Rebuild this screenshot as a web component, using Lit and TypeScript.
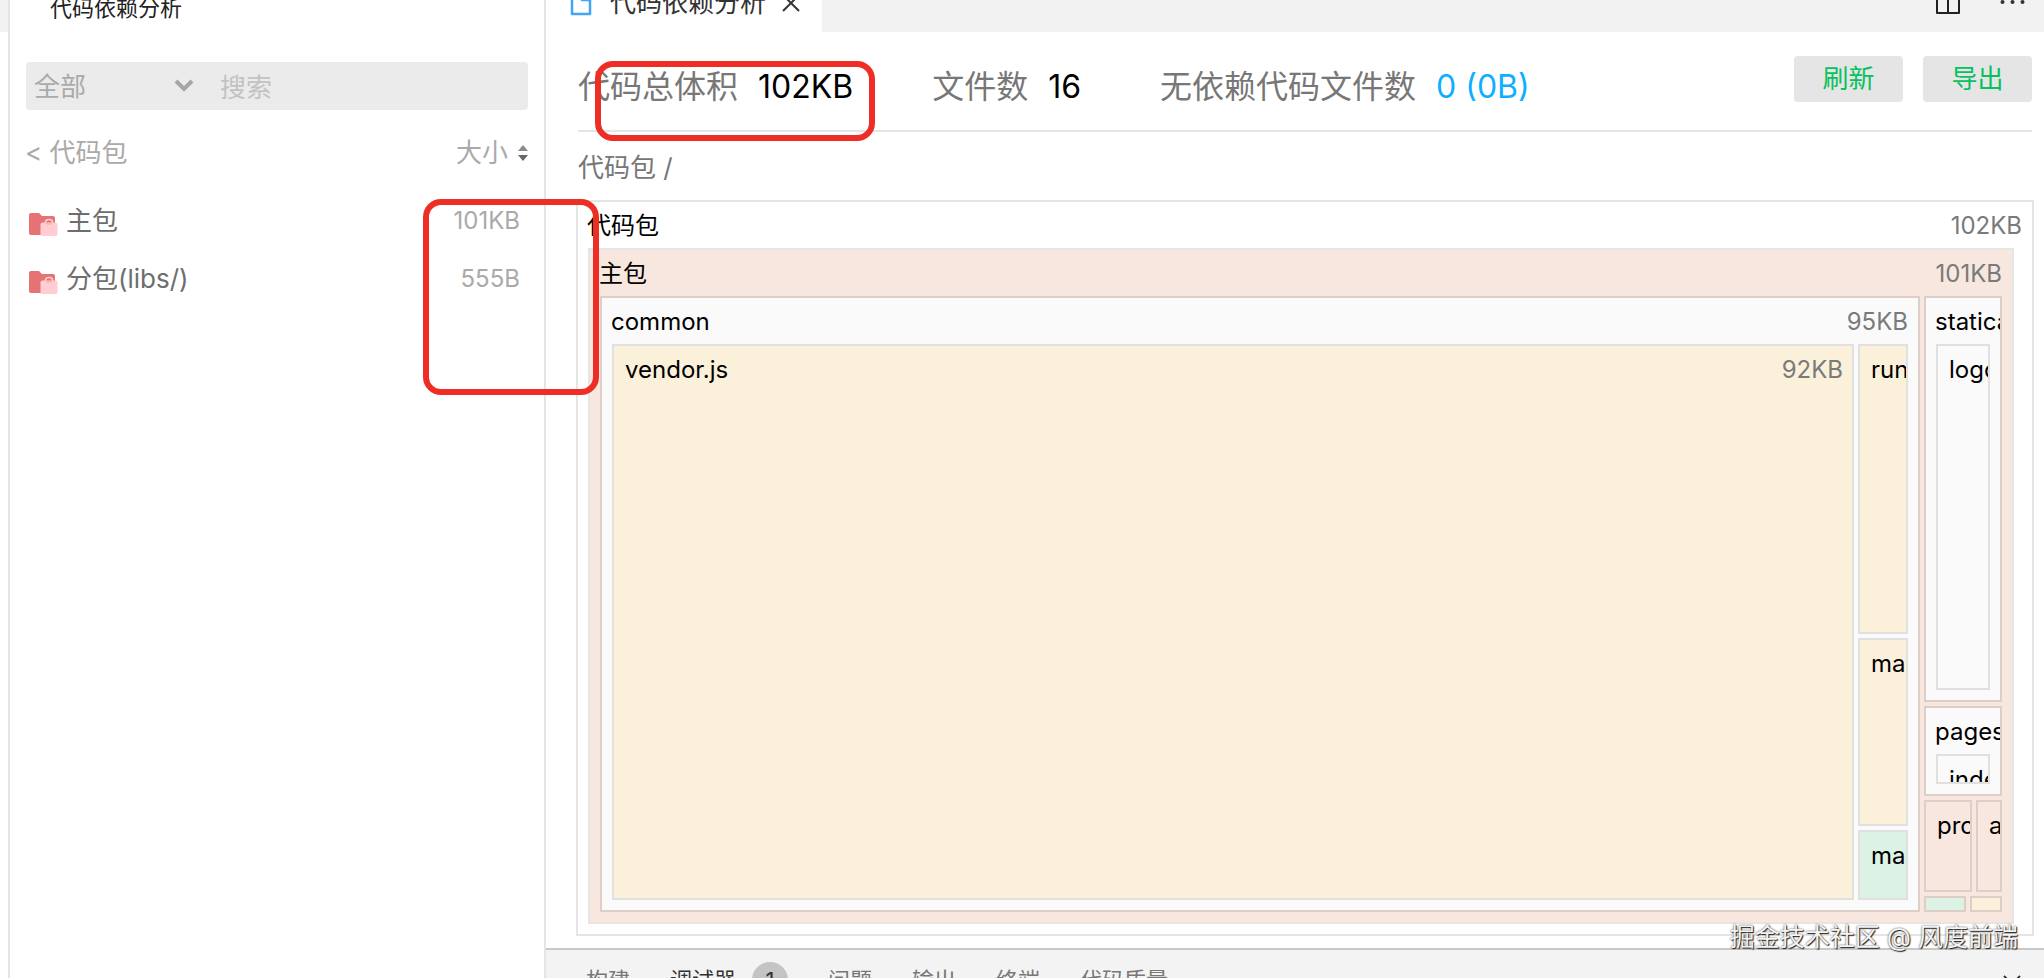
import { LitElement, html, css, svg, nothing, type TemplateResult } from "lit";
import { customElement, property } from "lit/decorators.js";
import { classMap } from "lit/directives/class-map.js";

const FONT = css`Inter, "Noto Sans CJK SC", "Liberation Sans", sans-serif`;

interface Tile {
  name?: string;
  size?: string;
  tone?: "plain" | "rose" | "grey" | "sand" | "mint";
  layout?: string;
  children?: Tile[];
}

const TREE: Tile = {
  name: "代码包",
  size: "102KB",
  tone: "plain",
  layout: "root",
  children: [
    {
      name: "主包",
      size: "101KB",
      tone: "rose",
      layout: "main",
      children: [
        {
          name: "common",
          size: "95KB",
          tone: "grey",
          layout: "common",
          children: [
            { name: "vendor.js", size: "92KB", tone: "sand" },
            {
              layout: "scripts",
              children: [
                { name: "runtime.js", tone: "sand" },
                { name: "main.js", tone: "sand" },
                { name: "main.wxss", tone: "mint" },
              ],
            },
          ],
        },
        {
          layout: "rest",
          children: [
            { name: "statica", tone: "grey", layout: "single", children: [{ name: "logo.png", tone: "grey" }] },
            { name: "pages", tone: "grey", layout: "single", children: [{ name: "index", tone: "grey" }] },
            {
              layout: "pair",
              children: [
                { name: "project.config.json", tone: "rose" },
                { name: "app.json", tone: "rose" },
              ],
            },
            { layout: "tail", children: [{ tone: "mint" }, { tone: "sand" }] },
          ],
        },
      ],
    },
  ],
};

@customElement("size-treemap")
export class SizeTreemap extends LitElement {
  @property({ attribute: false }) tree: Tile = TREE;

  static styles = css`
    :host { display: grid; min-height: 0; font: 24px/48px ${FONT}; color: #000; }
    * { box-sizing: border-box; }
    .tile {
      display: flex; flex-direction: column; min-width: 0; min-height: 0; overflow: hidden;
      border: 2px solid rgba(0, 0, 0, 0.1); background-clip: padding-box;
    }
    .plain { background-color: #fff; }
    .rose { background-color: #f7e7df; }
    .grey { background-color: #fafafa; }
    .sand { background-color: #fbf1da; }
    .mint { background-color: #dcf2e5; }
    .head { display: flex; flex: none; height: 46px; padding: 0 10px 0 9px; white-space: nowrap; }
    .leaf { padding: 0 9px 0 11px; }
    .name { flex: 1 0 auto; }
    .size { color: #7a7a7a; }
    .body { flex: 1; display: grid; min-height: 0; padding: 0 10px 10px; }
    .group { display: grid; min-width: 0; min-height: 0; }
    .root { padding-right: 18px; }
    .main { gap: 4px; grid-template-columns: minmax(0, 1320fr) minmax(0, 78fr); }
    .common { gap: 4px; grid-template-columns: minmax(0, 1242fr) minmax(0, 50fr); }
    .scripts { gap: 4px; grid-template-rows: minmax(0, 290fr) minmax(0, 188fr) minmax(0, 70fr); }
    .rest { gap: 4px; grid-template-rows: minmax(0, 406fr) minmax(0, 90fr) minmax(0, 92fr) minmax(0, 16fr); }
    .pair { gap: 4px; grid-template-columns: minmax(0, 48fr) minmax(0, 26fr); }
    .tail { gap: 4px; grid-template-columns: minmax(0, 42fr) minmax(0, 32fr); }
  `;

  private tile(t: Tile): TemplateResult {
    if (!t.tone) {
      return html`<div class=${classMap({ group: true, [t.layout ?? "single"]: true })}>
        ${t.children?.map((c) => this.tile(c))}
      </div>`;
    }
    return html`<div class=${classMap({ tile: true, [t.tone]: true })}>
      ${t.name
        ? html`<div class=${classMap({ head: true, leaf: !t.children })}>
            <span class="name">${t.name}</span>
            ${t.size ? html`<span class="size">${t.size}</span>` : nothing}
          </div>`
        : nothing}
      ${t.children
        ? html`<div class=${classMap({ body: true, [t.layout ?? "single"]: true })}>
            ${t.children.map((c) => this.tile(c))}
          </div>`
        : nothing}
    </div>`;
  }

  render() {
    return this.tile(this.tree);
  }
}

const folderIcon = svg`<svg class="folder" width="30" height="24" viewBox="0 0 30 24" aria-hidden="true">
  <path d="M3 0h8l3 3h11a2 2 0 0 1 2 2v15a2 2 0 0 1-2 2H3a2 2 0 0 1-2-2V2a2 2 0 0 1 2-2z" fill="#e57373"/>
  <path d="M17.500 10V9a3.500 2.500 0 0 1 7 0v1" fill="none" stroke="#ffcdd2" stroke-width="1.500"/>
  <rect x="12.500" y="9.500" width="17" height="13.500" rx="2" fill="#ffcdd2"/>
  <path d="M18.500 10v1h5v-1" fill="none" stroke="#f4a9ab" stroke-width="1"/>
</svg>`;

const PACKAGES = [
  { name: "主包", size: "101KB" },
  { name: "分包(libs/)", size: "555B" },
];

@customElement("package-sidebar")
export class PackageSidebar extends LitElement {
  static styles = css`
    :host {
      display: block; width: 538px; border: solid #e5e5e5; border-width: 0 2px; background: #fff;
      font: 26px/36px ${FONT}; color: #aaa; overflow: hidden;
    }
    * { box-sizing: border-box; }
    h2 { margin: 0 0 42px; padding-left: 40px; height: 20px; display: flex; align-items: flex-end; font-size: 22px; line-height: 24px; font-weight: 400; color: #222; }
    .search { display: flex; align-items: center; height: 48px; margin: 0 16px; background: #ebebeb; border-radius: 4px; }
    .pick { position: relative; flex: none; width: 184px; display: flex; align-items: center; }
    select, input { font: inherit; color: inherit; border: 0; background: none; outline: 0; margin: 0; appearance: none; }
    select { width: 100%; padding: 2px 8px 0; height: 48px; }
    .caret { position: absolute; right: 16px; pointer-events: none; }
    input { flex: 1; min-width: 0; padding: 2px 10px 0; height: 48px; }
    input::placeholder { color: #c2c2c2; opacity: 1; }
    .bar { display: flex; justify-content: space-between; align-items: center; margin: 25px 16px 0 15px; }
    button { font: inherit; color: inherit; background: none; border: 0; padding: 0; display: flex; align-items: center; gap: 10px; }
    ul { list-style: none; margin: 21px 24px 0 18px; padding: 0; }
    li { display: flex; align-items: center; height: 58px; gap: 8px; color: #6e6e6e; }
    .folder { flex: none; margin-top: 8px; }
    .size { margin-left: auto; font-size: 24px; color: #aaa; }
  `;

  render() {
    return html`
      <h2>代码依赖分析</h2>
      <div class="search">
        <div class="pick">
          <select aria-label="类型"><option>全部</option></select>
          <svg class="caret" width="20" height="14" viewBox="0 0 20 14" aria-hidden="true">
            <path d="M2 2l8 8 8-8" fill="none" stroke="#a6a6a6" stroke-width="4" />
          </svg>
        </div>
        <input type="text" placeholder="搜索" aria-label="搜索" />
      </div>
      <div class="bar">
        <button type="button">&lt; 代码包</button>
        <button type="button">
          大小
          <svg width="10" height="18" viewBox="0 0 10 18" aria-hidden="true">
            <path d="M5 1l5 6H0z" fill="#8a8a8a" /><path d="M5 17l5-6H0z" fill="#666" />
          </svg>
        </button>
      </div>
      <ul>
        ${PACKAGES.map((p) => html`<li>${folderIcon}<span>${p.name}</span><span class="size">${p.size}</span></li>`)}
      </ul>
    `;
  }
}

@customElement("app-root")
export class AppRoot extends LitElement {
  static styles = css`
    :host {
      display: flex; position: relative; height: 100vh; overflow: hidden; background: #fff;
      font: 26px/36px ${FONT}; color: #000;
    }
    * { box-sizing: border-box; }
    .edge { flex: none; width: 8px; height: 32px; background: #f2f2f2; }
    package-sidebar { flex: none; }
    main { flex: 1; min-width: 0; display: flex; flex-direction: column; }
    .tabs { flex: none; display: flex; align-items: flex-end; justify-content: space-between; height: 32px; background: #f2f2f2; overflow: hidden; }
    .tab { display: flex; align-items: center; height: 58px; width: 276px; padding: 0 20px 0 24px; background: #fff; color: #333; }
    .tab svg { flex: none; }
    .tab span { margin: 0 16px 0 18px; white-space: nowrap; }
    .tools { display: flex; align-items: center; gap: 40px; height: 60px; padding-right: 19px; }
    button { font: inherit; color: inherit; border: 0; padding: 0; background: none; display: flex; align-items: center; }
    .stats { flex: none; display: flex; margin: 0 12px 0 32px; height: 100px; padding-top: 24px; border-bottom: 2px solid #e5e5e5; }
    dl { display: flex; gap: 79px; margin: 8px 0 0; font-size: 32px; line-height: 46px; white-space: nowrap; }
    .stat { display: flex; gap: 20px; }
    dt { color: #777; }
    dd { margin: 0; }
    .link { color: #10aeff; }
    .actions { display: flex; gap: 20px; margin-left: auto; }
    .action { justify-content: center; width: 109px; height: 46px; border-radius: 4px; background: #e5e5e5; color: #07c160; }
    .crumbs { flex: none; padding: 18px 32px 14px; color: #777; }
    size-treemap { flex: 1; margin: 0 10px 12px 30px; }
    .panel { flex: none; height: 30px; border-top: 2px solid #c8c8c8; background: #f3f3f3; overflow: hidden; }
    .dock { display: flex; align-items: center; gap: 40px; height: 60px; padding: 0 22px 0 40px; font-size: 22px; color: #777; white-space: nowrap; }
    .active { color: #333; gap: 16px; }
    .badge { width: 36px; height: 36px; border-radius: 50%; background: #c4c4c4; text-align: center; }
    .collapse { margin-left: auto; color: #333; }
    .mark { position: absolute; border: 6px solid #ee2d24; border-radius: 18px; pointer-events: none; }
    .mark-total { left: 595px; top: 61px; width: 280px; height: 80px; }
    .mark-sizes { left: 423px; top: 199px; width: 176px; height: 196px; }
    .credit { position: absolute; right: 26px; bottom: 23px; font-size: 25px; color: #f4f4f4; text-shadow: 1px 1px 1px #222, 0 0 2px #444; }
  `;

  render() {
    return html`
      <div class="edge"></div>
      <package-sidebar></package-sidebar>
      <main>
        <div class="tabs">
          <div class="tab">
            <svg width="22" height="26" viewBox="0 0 22 26" aria-hidden="true">
              <path d="M2 1.500h11l7 7V24H2zM12 1.500V10h8" fill="none" stroke="#42a5f5" stroke-width="2.500" stroke-linejoin="round" />
            </svg>
            <span>代码依赖分析</span>
            <button type="button" aria-label="关闭">
              <svg width="18" height="18" viewBox="0 0 18 18"><path d="M1 1l16 16M17 1L1 17" stroke="#333" stroke-width="2" /></svg>
            </button>
          </div>
          <div class="tools">
            <button type="button" aria-label="拆分编辑器">
              <svg width="24" height="24" viewBox="0 0 24 24"><path d="M1 1h22v22H1zM12 1v22" fill="none" stroke="#222" stroke-width="2" stroke-linejoin="round" /></svg>
            </button>
            <button type="button" aria-label="更多">
              <svg width="25" height="6" viewBox="0 0 25 6" fill="#333"><circle cx="2.500" cy="3" r="2" /><circle cx="12.500" cy="3" r="2" /><circle cx="22.500" cy="3" r="2" /></svg>
            </button>
          </div>
        </div>
        <section class="stats">
          <dl>
            <div class="stat"><dt>代码总体积</dt><dd>102KB</dd></div>
            <div class="stat"><dt>文件数</dt><dd>16</dd></div>
            <div class="stat"><dt>无依赖代码文件数</dt><dd class="link">0 (0B)</dd></div>
          </dl>
          <div class="actions">
            <button type="button" class="action">刷新</button>
            <button type="button" class="action">导出</button>
          </div>
        </section>
        <nav class="crumbs">代码包 /</nav>
        <size-treemap></size-treemap>
        <div class="panel">
          <div class="dock">
            <button type="button">构建</button>
            <button type="button" class="active">调试器<span class="badge">1</span></button>
            <button type="button">问题</button>
            <button type="button">输出</button>
            <button type="button">终端</button>
            <button type="button">代码质量</button>
            <button type="button" class="collapse" aria-label="收起">
              <svg width="20" height="12" viewBox="0 0 20 12"><path d="M2 2l8 8 8-8" fill="none" stroke="#333" stroke-width="2" /></svg>
            </button>
          </div>
        </div>
      </main>
      <div class="mark mark-total"></div>
      <div class="mark mark-sizes"></div>
      <div class="credit">掘金技术社区 @ 风度前端</div>
    `;
  }
}
